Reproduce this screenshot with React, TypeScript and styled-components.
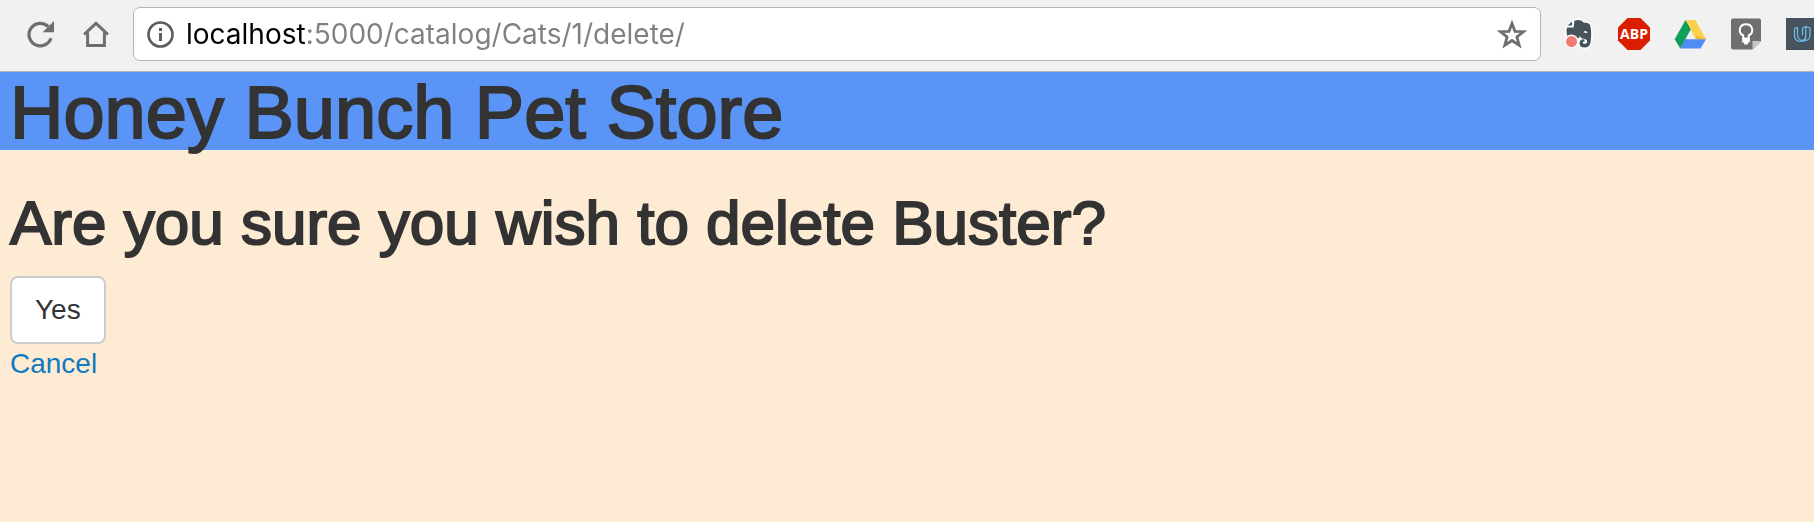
import React from "react";
import styled, { createGlobalStyle } from "styled-components";

const sans = `"Liberation Sans", Arial, sans-serif`;

const GlobalStyle = createGlobalStyle`
  *, *::before, *::after { box-sizing: border-box; }
  body {
    margin: 0;
    background: #fdebd4;
    color: #333333;
    font-family: ${sans};
    font-size: 28px;
    line-height: 40px;
  }
`;

const Toolbar = styled.div`
  display: flex;
  align-items: center;
  gap: 21px;
  padding: 7px 0 10px 24px;
  background: #f1f1f1;
  border-bottom: 1px solid #b4b4b4;
  overflow: hidden;
`;

const IconGroup = styled.div`
  display: flex;
  flex: none;
  gap: 24px;
`;

const IconButton = styled.button<{ $width?: number }>`
  flex: none;
  display: block;
  width: ${(p) => p.$width ?? 32}px;
  height: 32px;
  padding: 0;
  border: 0;
  background: none;
  overflow: hidden;

  svg {
    display: block;
    width: 32px;
    height: 32px;
  }
`;

const AddressBar = styled.form`
  flex: 1;
  min-width: 0;
  display: flex;
  align-items: center;
  gap: 10px;
  height: 54px;
  padding: 0 12px 0 10px;
  background: #ffffff;
  border: 1px solid #b4b4b4;
  border-radius: 7px;
`;

const AddressInput = styled.input<{ $hostWidth: number }>`
  flex: 1;
  min-width: 0;
  height: 40px;
  padding: 0;
  border: 0;
  outline: 0;
  font-family: Inter, sans-serif;
  font-size: 28px;
  color: transparent;
  caret-color: #000000;
  background: linear-gradient(
    to right,
    #000000 ${(p) => p.$hostWidth}px,
    #808080 ${(p) => p.$hostWidth}px
  );
  background-clip: text;
  -webkit-background-clip: text;
`;

const StoreHeader = styled.header`
  padding: 3px 10px 0;
  background: #5a94f6;
`;

const Heading = styled.h1<{ $size: number; $line: number }>`
  margin: 0;
  font-size: ${(p) => p.$size}px;
  line-height: ${(p) => p.$line}px;
  font-weight: 400;
  -webkit-text-stroke: 2px #333333;
`;

const Main = styled.main`
  display: flex;
  flex-direction: column;
  align-items: flex-start;
  padding: 40px 10px;
`;

const ConfirmForm = styled.form`
  margin-top: 20px;
`;

const ConfirmButton = styled.button`
  display: block;
  padding: 12px 23px;
  border: 2px solid #cccccc;
  border-radius: 8px;
  background: #ffffff;
  color: #333333;
  font-family: ${sans};
  font-size: 28px;
  line-height: 40px;
`;

const CancelLink = styled.a`
  color: #1279c0;
  text-decoration: none;
`;

const ReloadIcon = () => (
  <svg viewBox="0 0 32 32">
    <path d="M27 20.300A11.300 11.300 0 1 1 24.200 8.500" fill="none" stroke="#6e6e6e" strokeWidth="3.200" />
    <path d="M30 3v11.200H18.600z" fill="#6e6e6e" />
  </svg>
);

const HomeIcon = () => (
  <svg viewBox="0 0 32 32" fill="none" stroke="#6e6e6e" strokeWidth="3">
    <path d="M4 16.500 16 5.300l12 11.200M7.600 14.500v13h16.800v-13" />
  </svg>
);

const InfoIcon = () => (
  <svg viewBox="0 0 32 32">
    <circle cx="16.500" cy="16.500" r="12" fill="none" stroke="#5c5c5c" strokeWidth="2.600" />
    <path d="M15 10h3v3h-3zM15 15h3v8h-3z" fill="#5c5c5c" />
  </svg>
);

const StarIcon = () => (
  <svg viewBox="0 0 32 32">
    <path
      d="M16 5.500 19 13.400 27.500 13.700 20.900 18.900 23.200 27.200 16 22.500 8.800 27.200 11.100 18.900 4.500 13.700 13 13.400z"
      fill="none"
      stroke="#6e6e6e"
      strokeWidth="2.800"
    />
  </svg>
);

const elephant =
  "M12.500 2.500C17 1 20 2.500 21.500 4.500c3 .3 5.500 .5 6.500 2.500 1.500 4.500 1.500 12 .5 17.500-.8 4-3 5-6 5-3.500 0-5-1.500-5-4.500 0-2.700 2-4 5-3.800v2.300c-1.500 0-2 .7-1.500 1.700.8 1 3.500 .8 4-.7.6-2-.5-3.500-3-3.700-3-.2-3.500-1.300-4-3-.5 1.500-1 2.700-3 3L6 19.500C4.500 16 4 12.500 5 9.500h6.500z";

const ElephantIcon = () => (
  <svg viewBox="0 0 32 32">
    <path d={elephant} fill="#ffffff" stroke="#ffffff" strokeWidth="3" strokeLinejoin="round" />
    <path d="M4.500 8 10.500 2.500v5.500z" fill="#47535a" stroke="#ffffff" strokeWidth="1" />
    <path d={elephant} fill="#47535a" />
    <path d="M21.500 14.500c.5-2.200 3.500-2.200 4 .5z" fill="#ffffff" />
    <circle cx="9.500" cy="23.500" r="6.200" fill="#f27b73" stroke="#ffffff" strokeWidth="1.400" />
  </svg>
);

const AbpIcon = () => (
  <svg viewBox="0 0 32 32">
    <path d="M9.500 0h13L32 9.500v13L22.500 32h-13L0 22.500v-13z" fill="#dc1e00" />
    <text
      x="16"
      y="21"
      textAnchor="middle"
      fill="#ffffff"
      fontFamily="'Open Sans', sans-serif"
      fontWeight="700"
      fontSize="14"
    >
      ABP
    </text>
  </svg>
);

const DriveIcon = () => (
  <svg viewBox="0 0 32 32">
    <path d="M11.500 2 16.800 11.200 6.300 30.500.700 21.300z" fill="#11a05c" />
    <path d="M11.500 2H21.300L32 21.300H21.700z" fill="#ffd04c" />
    <path d="M11.600 21.300H32L26.500 30.500H6.300z" fill="#4f8df5" />
    <path d="M11.600 21.300 6.300 30.500 14 21.300z" fill="#3568c8" opacity=".4" />
    <path d="M16.800 11.200 11.500 2l4 11.500z" fill="#0a7040" opacity=".4" />
    <path d="M21.700 21.300H32l-9.300-3.500z" fill="#d99a20" opacity=".5" />
  </svg>
);

const BulbIcon = () => (
  <svg viewBox="0 0 32 32">
    <path d="M3 .5h26a2 2 0 0 1 2 2V23l-8.500 8.500H3a2 2 0 0 1-2-2v-27a2 2 0 0 1 2-2z" fill="#6f6f6f" />
    <path d="M31 23l-8.500 8.500V23z" fill="#c6c6c6" />
    <path
      d="M13.200 20.500v-3C7.500 14.500 9.200 6.200 16 6.200s8.500 8.300 2.800 11.300v3z"
      fill="none"
      stroke="#ffffff"
      strokeWidth="2"
      strokeLinejoin="round"
    />
    <path d="M12.200 20h7.600v4.500h-2V26.500h-3.600v-2h-2z" fill="#ffffff" />
  </svg>
);

const CourseIcon = () => (
  <svg viewBox="0 0 32 32">
    <path d="M0 0h32v32H0z" fill="#47525f" />
    <path
      d="M11.500 9.200 8.500 10.800v6.400c0 7.500 9.500 8 11.500 2.300M11.500 9.200v6.500c0 5 2.800 7.200 6 6.800M16.500 10.200l3.200-1.500v8.500c0 2.600-1.200 4.600-3 5.300M19.700 8.700l4.300 1.200v7c0 4.500-3.500 6.500-7.300 5.600M16.500 10.200v7"
      fill="none"
      stroke="#69b9e4"
      strokeWidth="1.300"
      strokeLinejoin="round"
    />
  </svg>
);

export default function App() {
  return (
    <>
      <GlobalStyle />
      <Toolbar>
        <IconGroup>
          <IconButton type="button" aria-label="Reload"><ReloadIcon /></IconButton>
          <IconButton type="button" aria-label="Home"><HomeIcon /></IconButton>
        </IconGroup>
        <AddressBar onSubmit={(e) => e.preventDefault()}>
          <IconButton type="button" aria-label="Site information"><InfoIcon /></IconButton>
          <AddressInput
            type="text"
            aria-label="Address"
            defaultValue="localhost:5000/catalog/Cats/1/delete/"
            spellCheck={false}
            $hostWidth={120}
          />
          <IconButton type="button" aria-label="Bookmark"><StarIcon /></IconButton>
        </AddressBar>
        <IconGroup>
          <IconButton type="button" aria-label="Evernote"><ElephantIcon /></IconButton>
          <IconButton type="button" aria-label="Adblock Plus"><AbpIcon /></IconButton>
          <IconButton type="button" aria-label="Google Drive"><DriveIcon /></IconButton>
          <IconButton type="button" aria-label="Google Keep"><BulbIcon /></IconButton>
          <IconButton type="button" aria-label="Udacity" $width={28}><CourseIcon /></IconButton>
        </IconGroup>
      </Toolbar>
      <StoreHeader>
        <Heading $size={74} $line={75}>Honey Bunch Pet Store</Heading>
      </StoreHeader>
      <Main>
        <Heading as="h2" $size={62} $line={66}>Are you sure you wish to delete Buster?</Heading>
        <ConfirmForm onSubmit={(e) => e.preventDefault()}>
          <ConfirmButton type="submit">Yes</ConfirmButton>
        </ConfirmForm>
        <CancelLink href="#">Cancel</CancelLink>
      </Main>
    </>
  );
}
